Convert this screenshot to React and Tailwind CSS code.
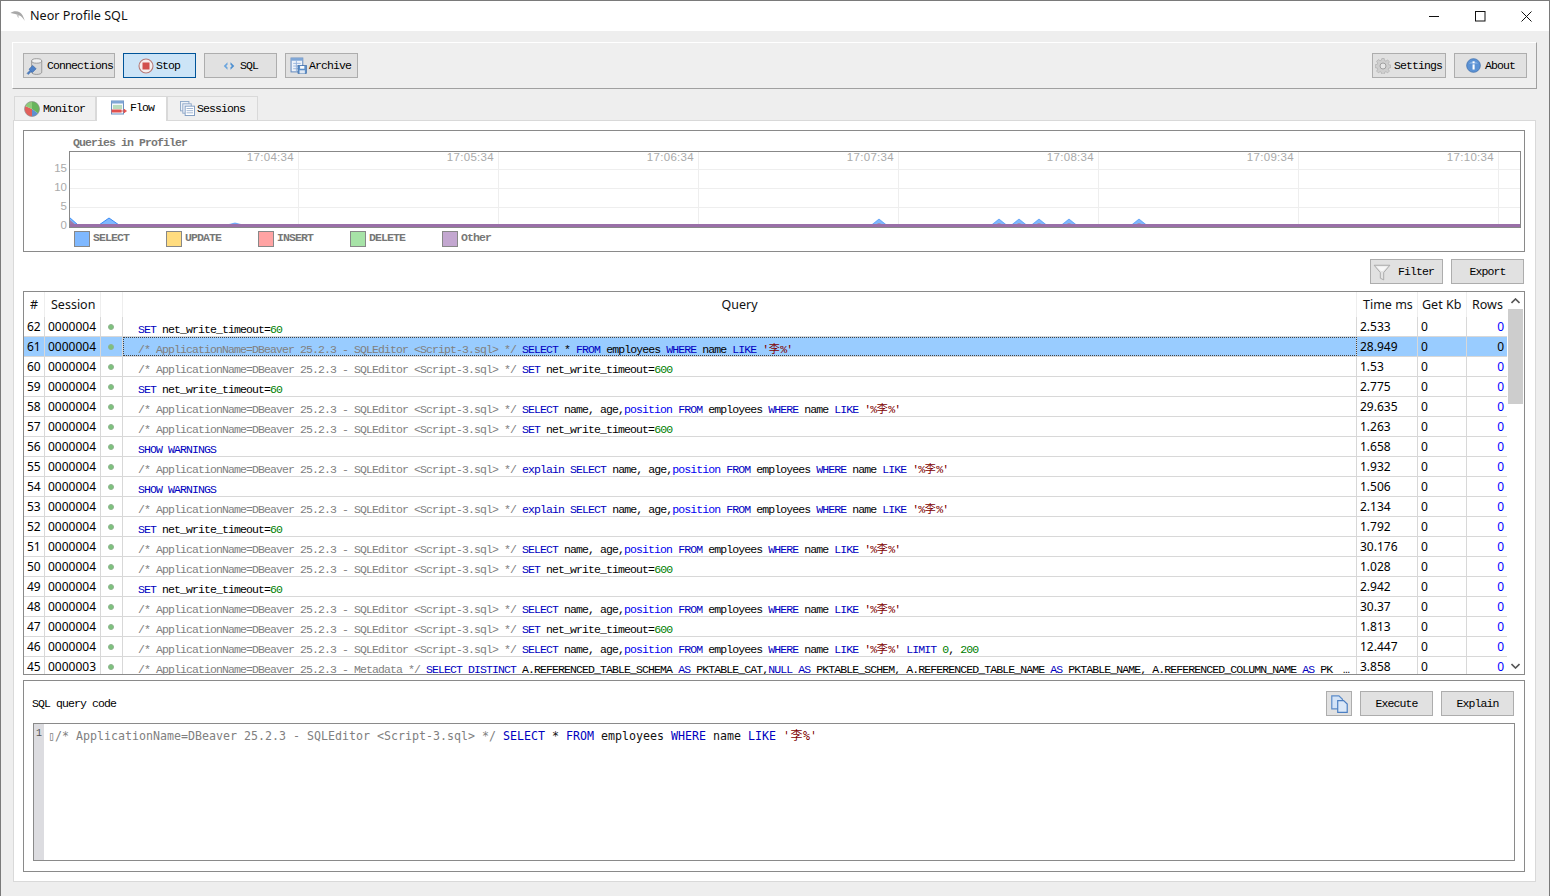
import React from "react";

const mono = "font-['Liberation_Mono','Noto_Sans_CJK_SC',monospace] text-[11.5px] tracking-[-0.9px]";
const sans = "font-['Noto_Sans',sans-serif] text-[12px]";

const K = "text-[#0000c0]", C = "text-[#808080]", N = "text-[#008000]", S = "text-[#800000]", P = "text-[#0000f0]";
const cm = ["/* ApplicationName=DBeaver 25.2.3 - SQLEditor <Script-3.sql> */ ", C];
const Cjk = () => <span className="inline-block w-[12px] tracking-normal leading-[0] font-['Noto_Sans_CJK_SC',sans-serif] text-[11px] text-center">李</span>;
const set60 = [["SET", K], [" net_write_timeout="], ["60", N]];
const set600 = [cm, ["SET", K], [" net_write_timeout="], ["600", N]];
const show = [["SHOW WARNINGS", K]];
const nameTail = [["SELECT", K], [" name, age,"], ["position", P], [" "], ["FROM", K], [" employees "], ["WHERE", K], [" name "], ["LIKE", K], [" "], ["'%李%'", S]];
const named = [cm, ...nameTail];
const explain = [cm, ["explain", K], [" "], ...nameTail];
const star = [cm, ["SELECT", K], [" * "], ["FROM", K], [" employees "], ["WHERE", K], [" name "], ["LIKE", K], [" "], ["'李%'", S]];
const limit = [...named, [" "], ["LIMIT", K], [" "], ["0", N], [", "], ["200", N]];
const meta = [["/* ApplicationName=DBeaver 25.2.3 - Metadata */ ", C], ["SELECT DISTINCT", K], [" A.REFERENCED_TABLE_SCHEMA "], ["AS", K], [" PKTABLE_CAT,"], ["NULL", K], [" "], ["AS", K], [" PKTABLE_SCHEM, A.REFERENCED_TABLE_NAME "], ["AS", K], [" PKTABLE_NAME, A.REFERENCED_COLUMN_NAME "], ["AS", K], [" PK"]];

const rows = [
  [62, "0000004", set60, "2.533"], [61, "0000004", star, "28.949"], [60, "0000004", set600, "1.53"],
  [59, "0000004", set60, "2.775"], [58, "0000004", named, "29.635"], [57, "0000004", set600, "1.263"],
  [56, "0000004", show, "1.658"], [55, "0000004", explain, "1.932"], [54, "0000004", show, "1.506"],
  [53, "0000004", explain, "2.134"], [52, "0000004", set60, "1.792"], [51, "0000004", named, "30.176"],
  [50, "0000004", set600, "1.028"], [49, "0000004", set60, "2.942"], [48, "0000004", named, "30.37"],
  [47, "0000004", set600, "1.813"], [46, "0000004", limit, "12.447"], [45, "0000003", meta, "3.858", true],
];

function Tok({ items }) {
  return items.map(([t, c], i) => {
    const parts = t.split("李");
    return (
      <span key={i} className={c}>
        {parts.map((p, j) => <React.Fragment key={j}>{j > 0 && <Cjk />}{p}</React.Fragment>)}
      </span>
    );
  });
}

const Svg = ({ children, s = 16, className = "" }) => <svg width={s} height={s} viewBox="0 0 16 16" className={"shrink-0 " + className}>{children}</svg>;

const IconDb = () => (
  <Svg s={18}>
    <path d="M5 3.500v10c0 1.200 2 2 4.500 2s4.500-.8 4.500-2v-10z" fill="#d8d8d8" stroke="#8a8a8a" strokeWidth=".7" />
    <ellipse cx="9.500" cy="3.500" rx="4.500" ry="2" fill="#f1f1f1" stroke="#8a8a8a" strokeWidth=".7" />
    <path d="M1 14.500 3.500 12l-.8-1.200L6 7.500l3 3-3.300 3.300L4.500 13l-2.500 2.500z" fill="#4f81c7" stroke="#2f5f9f" strokeWidth=".5" />
  </Svg>
);
const IconStop = () => (
  <Svg>
    <circle cx="8" cy="8" r="7" fill="#f6eeee" stroke="#b77b78" strokeWidth="1.100" />
    <rect x="4.500" y="4.500" width="7" height="7" fill="#d2504d" />
  </Svg>
);
const IconSql = () => (
  <Svg s={12}>
    <path d="M6 3 1 8l5 5V9.800L4 8l2-1.800z" fill="#6aa5de" />
    <path d="M10 3l5 5-5 5V9.800L12 8l-2-1.800z" fill="#4d8fd1" />
  </Svg>
);
const IconArchive = () => (
  <Svg s={17}>
    <rect x="1" y="1" width="11" height="13" fill="#eef3fa" stroke="#6a8fc0" />
    <rect x="1" y="1" width="11" height="2.500" fill="#7fa6d6" />
    <path d="M3 6h7M3 8.500h7M3 11h7M6 3.500V14" stroke="#8fb0da" strokeWidth=".8" />
    <rect x="7.500" y="8" width="8" height="7.500" fill="#5c8fc9" stroke="#3a6aa5" strokeWidth=".6" />
    <rect x="9.500" y="8.500" width="4" height="2.500" fill="#fff" />
    <rect x="9" y="12.500" width="5" height="3" fill="#dfe8f3" />
  </Svg>
);
const IconGear = () => (
  <Svg>
    <path d="M6.800.5h2.400l.4 2 1.300.6 1.800-1.100 1.700 1.700-1.100 1.800.6 1.300 2 .4v2.400l-2 .4-.6 1.300 1.100 1.800-1.700 1.700-1.800-1.100-1.300.6-.4 2H6.800l-.4-2-1.300-.6-1.800 1.100-1.700-1.700 1.100-1.800-.6-1.300-2-.4V6.800l2-.4.6-1.300-1.100-1.800 1.700-1.700 1.800 1.100 1.300-.6z" fill="#cfcfcf" stroke="#a8a8a8" strokeWidth=".6" />
    <circle cx="8" cy="8" r="3" fill="#e8e8e8" stroke="#9a9a9a" strokeWidth=".9" />
  </Svg>
);
const IconInfo = () => (
  <Svg s={15}>
    <circle cx="8" cy="8" r="7.300" fill="#5b92d4" stroke="#3f6fad" strokeWidth=".8" />
    <path d="M3 6a6 5 0 0 1 10 0z" fill="#9fc3ec" opacity=".6" />
    <rect x="7" y="6.800" width="2.200" height="5.500" fill="#fff" />
    <rect x="7" y="3.600" width="2.200" height="2" fill="#fff" />
  </Svg>
);
const IconPie = () => (
  <Svg s={16}>
    <path d="M8 8 8 .5A7.500 7.500 0 0 1 14 12.500z" fill="#67b45b" />
    <path d="M8 8 14 12.500A7.500 7.500 0 0 1 8 15.500z" fill="#5d8fd0" />
    <path d="M8 8 8 15.500A7.500 7.500 0 0 1 1.200 5z" fill="#e2605b" />
    <path d="M8 8 1.200 5A7.500 7.500 0 0 1 8 .5z" fill="#8ecb7a" />
    <circle cx="8" cy="8" r="7.500" fill="none" stroke="#8a8a8a" strokeWidth=".6" />
  </Svg>
);
const IconFlow = () => (
  <Svg s={16}>
    <rect x=".5" y="1" width="12" height="13" fill="#f4f7fb" stroke="#6a8fc0" />
    <rect x=".5" y="1" width="12" height="2.500" fill="#7fa6d6" />
    <path d="M2 6h9M2 8h9" stroke="#7fbf7f" strokeWidth="1" />
    <rect x=".5" y="9.500" width="10" height="3" fill="#e2504d" />
    <path d="M10 11h4.500M13 9.200 15.500 11 13 12.800z" stroke="#e2504d" fill="#e2504d" strokeWidth=".8" />
  </Svg>
);
const IconSessions = () => (
  <Svg s={15}>
    <rect x=".5" y=".5" width="9" height="10" fill="#eef2f8" stroke="#8fa8c8" />
    <rect x="3" y="3" width="9" height="10" fill="#eef2f8" stroke="#8fa8c8" />
    <rect x="5.500" y="5.500" width="10" height="10" fill="#fff" stroke="#7f9cc2" />
    <path d="M7 8h7M7 10.300h7M7 12.600h7" stroke="#9db3d1" />
  </Svg>
);
const IconFunnel = () => (
  <Svg s={18}>
    <path d="M1 2h14L9.500 8.500V15l-3-1.500v-5z" fill="#e4e4e4" stroke="#a5a5a5" strokeWidth=".8" />
    <path d="M3 3h10L9 7H7z" fill="#f7f7f7" />
  </Svg>
);
const IconCopy = () => (
  <Svg s={19}>
    <path d="M1.500 1.500h6l3 3v8h-9z" fill="#d3e3f7" stroke="#5b8bc9" />
    <path d="M6.500 5.500h5l3 3v7h-8z" fill="#dbe8f8" stroke="#4c7fc2" />
  </Svg>
);
const Logo = () => (
  <svg width="16" height="12" viewBox="0 0 16 12" className="shrink-0">
    <path d="M.5 3C3 1 7 .5 10 2.500c2 1.300 3.500 4 4.800 8.500C13 8 11.500 6.500 9.500 5.500 7 4.200 3.500 3.500.5 3z" fill="#a8a8a8" />
    <path d="M9 5c-.5 1.200-.5 2.200 0 3-1.500-.7-2.200-1.800-2.200-3.500z" fill="#c8c8c8" />
  </svg>
);

function Btn({ w, icon, children, active, className = "" }) {
  return (
    <div className={`${w} h-[25px] shrink-0 flex items-center border ${active ? "bg-[#cce4f7] border-[#005499]" : "bg-[#e1e1e1] border-[#adadad]"} ${mono} text-black whitespace-pre ${className}`}>
      {icon}{children && <span className="mt-[1px]">{children}</span>}
    </div>
  );
}

function Tab({ w, active, icon, label }) {
  return (
    <div className={`${w} flex items-center border border-[#d9d9d9] ${active ? "h-[25px] bg-white border-b-0 -mb-px relative z-10 pb-[2px]" : "h-[24px] bg-[#f0f0f0] border-b-0"} ${mono} text-black whitespace-pre`}>
      {icon}{label}
    </div>
  );
}

function Chart() {
  const peaks = [879, 999, 1019, 1039, 1069, 1139];
  const bump = (x, h = 5) => `M${x - 10 - 69} 76 L${x - 69} ${73 - h} L${x + 10 - 69} 76 Z`;
  return (
    <div className="w-[1452px] h-[77px] border border-[#888888] shrink-0">
      <svg width="1450" height="75" viewBox="1 1 1450 75" className="block">
        {[18, 37, 56].map(y => <line key={y} x1="0" x2="1452" y1={y + .5} y2={y + .5} stroke="#eeeeee" />)}
        {[298, 498, 698, 898, 1098, 1298, 1498].map((x, i) => (
          <g key={x}>
            <line x1={x - 69 + .5} x2={x - 69 + .5} y1="0" y2="77" stroke="#eeeeee" />
            <text x={x - 73} y="10" textAnchor="end" fontSize="11.500" letterSpacing=".3" fontFamily="Liberation Sans, sans-serif" fill="#aaaaaa">{`17:${String(4 + i).padStart(2, "0")}:34`}</text>
          </g>
        ))}
        <path d="M0 66 L9 74 L30 74 L40 67 L50 74 L0 74Z" fill="#7fb8ff" stroke="#3b8cf5" strokeWidth="1" />
        <path d="M0 68 L9 76 L0 76Z" fill="#a07ba8" />
        <path d="M158 74 L166 72 L174 74Z" fill="#7fb8ff" stroke="#3b8cf5" strokeWidth=".6" />
        {peaks.map(x => <path key={x} d={bump(x)} fill="#7fb8ff" stroke="#3b8cf5" strokeWidth=".6" />)}
        {peaks.map(x => <path key={"b" + x} d={bump(x, 1)} fill="#b08a9a" />)}
        <rect x="1" y="73" width="1450" height="3" fill="#9a6fa8" />
      </svg>
    </div>
  );
}

const legend = [["SELECT", "bg-[#7fb8ff]"], ["UPDATE", "bg-[#ffdc7f]"], ["INSERT", "bg-[#ffa3a3]"], ["DELETE", "bg-[#a7e3a7]"], ["Other", "bg-[#c3a7d0]"]];

function Row({ r }) {
  const [n, sess, q, time, last] = r;
  const sel = n === 61;
  const bg = sel ? "bg-[#99ccff]" : "";
  return (
    <div className={`flex h-[20px] shrink-0 border-b border-[#d8d8d8] ${sans} text-black`}>
      <div className={`w-[21px] pl-[3px] border-r border-[#d8d8d8] leading-[19px] ${bg}`}>{n}</div>
      <div className={`w-[56px] pl-[3px] border-r border-[#d8d8d8] leading-[19px] ${bg}`}>{sess}</div>
      <div className={`w-[22px] flex justify-center pr-[1px] pt-[7px] border-r border-[#d8d8d8] ${bg}`}>
        <span className="w-[6px] h-[6px] rounded-full bg-[#7cc27c] border border-[#8fb38f]" />
      </div>
      <div className={`w-[1234px] flex pl-[15px] pr-[3px] pt-[3px] border-r border-[#d8d8d8] overflow-hidden ${mono} leading-[19px] whitespace-pre ${sel ? "bg-[#99ccff] outline outline-1 -outline-offset-1 outline-dotted outline-[#444444]" : ""}`}>
        <span className="flex-1 overflow-hidden"><Tok items={q} /></span>
        {last && <span className="shrink-0 w-[12px] text-center mr-[1px]">…</span>}
      </div>
      <div className={`w-[61px] pl-[3px] border-r border-[#d8d8d8] leading-[19px] ${bg}`}>{time}</div>
      <div className={`w-[49px] pl-[3px] border-r border-[#d8d8d8] leading-[19px] ${bg}`}>0</div>
      <div className={`w-[40px] pr-[3px] text-right leading-[19px] ${sel ? "bg-[#99ccff] text-black" : "text-[#0000ff]"}`}>0</div>
    </div>
  );
}

function Header() {
  return (
    <div className={`flex h-[25px] shrink-0 font-['Noto_Sans',sans-serif] text-[12.5px] text-[#111111] leading-[26px]`}>
      <div className="w-[21px] text-center border-r border-[#eeeeee]">#</div>
      <div className="w-[56px] pl-[6px] border-r border-[#eeeeee]">Session</div>
      <div className="w-[22px] border-r border-[#eeeeee]" />
      <div className="w-[1234px] text-center border-r border-[#eeeeee]">Query</div>
      <div className="w-[61px] pl-[6px] border-r border-[#eeeeee] whitespace-pre">Time ms</div>
      <div className="w-[49px] pl-[4px] border-r border-[#eeeeee] whitespace-pre">Get Kb</div>
      <div className="w-[40px] pl-[5px]">Rows</div>
    </div>
  );
}

export default function App() {
  return (
    <div className="w-[1550px] h-[896px] flex flex-col border border-b-0 border-[#7a7a7a] bg-[#eeeeee] overflow-hidden">
      {/* title bar */}
      <div className="h-[30px] shrink-0 bg-white flex items-center pl-[9px]">
        <Logo />
        <span className="ml-[4px] font-['Noto_Sans',sans-serif] text-[12.6px] text-[#111111]">Neor Profile SQL</span>
        <div className="ml-auto flex items-center">
          <svg width="11" height="11" viewBox="0 0 11 11" className="mr-[35px]"><path d="M0 5.500h10" stroke="#111" /></svg>
          <svg width="11" height="11" viewBox="0 0 11 11" className="mr-[35px]"><rect x=".5" y=".5" width="9.500" height="9.500" fill="none" stroke="#111" /></svg>
          <svg width="11" height="11" viewBox="0 0 11 11" className="mr-[17px]"><path d="M.5.500l10 10M10.500.500l-10 10" stroke="#111" /></svg>
        </div>
      </div>

      <div className="flex-1 flex flex-col pl-[11px] pr-[12px] pt-[11px] min-h-0">
        {/* toolbar */}
        <div className="h-[47px] shrink-0 bg-[#efefef] border-t border-l border-white border-b border-b-[#a0a0a0] border-r border-r-[#a0a0a0] flex items-center pl-[10px] pr-[9px] gap-[8px]">
          <Btn w="w-[92px]" icon={<span className="ml-[2px] mr-[3px]"><IconDb /></span>}>Connections</Btn>
          <Btn w="w-[73px]" active icon={<span className="ml-[14px] mr-[2px]"><IconStop /></span>}>Stop</Btn>
          <Btn w="w-[73px]" icon={<span className="ml-[18px] mr-[5px]"><IconSql /></span>}>SQL</Btn>
          <Btn w="w-[73px]" icon={<span className="ml-[4px] mr-[2px]"><IconArchive /></span>}>Archive</Btn>
          <div className="flex-1" />
          <Btn w="w-[74px]" icon={<span className="ml-[2px] mr-[3px]"><IconGear /></span>}>Settings</Btn>
          <Btn w="w-[73px]" icon={<span className="ml-[11px] mr-[4px]"><IconInfo /></span>}>About</Btn>
        </div>

        {/* tabs */}
        <div className="h-[25px] mt-[6px] shrink-0 flex items-end pl-[2px]">
          <Tab w="w-[82px]" icon={<span className="ml-[9px] mr-[3px]"><IconPie /></span>} label="Monitor" />
          <Tab w="w-[71px]" active icon={<span className="ml-[14px] mr-[3px]"><IconFlow /></span>} label="Flow" />
          <Tab w="w-[91px]" icon={<span className="ml-[12px] mr-[2px]"><IconSessions /></span>} label="Sessions" />
        </div>

        {/* main panel */}
        <div className="flex-1 mb-[14px] mr-[1px] ml-px bg-white border border-[#d9d9d9] flex flex-col pl-[9px] pr-[10px] pt-[9px] pb-[9px] min-h-0">
          {/* chart */}
          <div className="h-[122px] shrink-0 border border-[#8a8a8a] flex flex-col">
            <div className={`h-[20px] pl-[49px] leading-[24px] font-bold text-[#777777] ${mono}`}>Queries in Profiler</div>
            <div className="flex h-[77px]">
              <div className="w-[45px] shrink-0 pt-[8px] font-['Liberation_Sans',sans-serif] text-[11.5px] text-[#aaaaaa] text-right pr-[2px] leading-[19px]">
                <div>15</div><div>10</div><div>5</div><div>0</div>
              </div>
              <Chart />
            </div>
            <div className="flex mt-[3px] pl-[50px]">
              {legend.map(([t, c]) => (
                <div key={t} className="w-[92px] flex items-center">
                  <span className={`w-[16px] h-[16px] border border-[#888888] ${c}`} />
                  <span className={`ml-[3px] -mt-[2px] font-bold text-[#777777] ${mono}`}>{t}</span>
                </div>
              ))}
            </div>
          </div>

          {/* filter / export */}
          <div className="flex justify-end gap-[8px] mt-[7px] mr-[1px] shrink-0">
            <Btn w="w-[73px]" icon={<span className="ml-[2px] mr-[7px]"><IconFunnel /></span>}>Filter</Btn>
            <Btn w="w-[73px]" className="justify-center">Export</Btn>
          </div>

          {/* table */}
          <div className="h-[384px] mt-[7px] shrink-0 border border-[#8a8a8a] flex overflow-hidden">
            <div className="w-[1483px] shrink-0 flex flex-col">
              <Header />
              {rows.map(r => <Row key={r[0]} r={r} />)}
            </div>
            <div className="flex-1 ml-[1px] pr-[1px] flex flex-col items-stretch">
              <div className="h-[17px] flex items-center justify-center">
                <svg width="9" height="6" viewBox="0 0 9 6"><path d="M.5 5 4.500 1l4 4" fill="none" stroke="#555" strokeWidth="1.600" /></svg>
              </div>
              <div className="h-[95px] bg-[#cdcdcd]" />
              <div className="flex-1" />
              <div className="h-[17px] flex items-center justify-center">
                <svg width="9" height="6" viewBox="0 0 9 6"><path d="M.5 1l4 4 4-4" fill="none" stroke="#555" strokeWidth="1.600" /></svg>
              </div>
            </div>
          </div>

          {/* SQL panel */}
          <div className="flex-1 mt-[5px] border border-[#8a8a8a] flex flex-col px-[9px] pt-[10px] pb-[10px] min-h-0">
            <div className="flex items-center h-[25px] shrink-0 pr-[1px]">
              <span className={`${mono} text-black -ml-px`}>SQL query code</span>
              <div className="flex-1" />
              <Btn w="w-[26px] mr-[8px]" className="justify-center" icon={<IconCopy />} />
              <Btn w="w-[73px] mr-[8px]" className="justify-center">Execute</Btn>
              <Btn w="w-[73px]" className="justify-center">Explain</Btn>
            </div>
            <div className="flex-1 mt-[7px] border border-[#8a8a8a] flex min-h-0">
              <div className="w-[10px] bg-[#dcdce0] text-[10px] font-['Liberation_Mono',monospace] text-[#555555] pl-[2px] pt-[2px]">1</div>
              <div className="pl-[4px] pt-[3px] font-['DejaVu_Sans_Mono','Noto_Sans_CJK_SC',monospace] text-[11.63px] leading-[18px] whitespace-pre text-[#111111]">
                <span className={C}>{"▯/* ApplicationName=DBeaver 25.2.3 - SQLEditor <Script-3.sql> */ "}</span>
                <span className={K}>SELECT</span>{" * "}<span className={K}>FROM</span>{" employees "}<span className={K}>WHERE</span>{" name "}<span className={K}>LIKE</span>{" "}
                <span className="text-[#800000]">'<span className="inline-block w-[13px] leading-[0] text-center font-['Noto_Sans_CJK_SC',sans-serif] text-[12px]">李</span>%'</span>
              </div>
            </div>
          </div>
        </div>
      </div>
    </div>
  );
}
